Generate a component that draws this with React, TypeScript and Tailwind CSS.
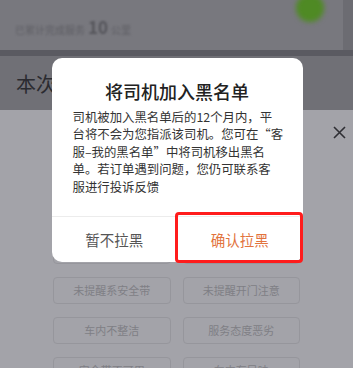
import React from 'react'

const chips = [
    ['投诉司机行为', '司机不认路'],
    ['未提醒系安全带', '未提醒开门注意'],
    ['车内不整洁', '服务态度恶劣'],
    ['安全带不可用', '车内有异味'],
]

// body copy, broken the way the dialog shows it
const bodyLines = [
    '司机被加入黑名单后的12个月内，平',
    '台将不会为您指派该司机。您可在“客',
    '服–我的黑名单”中将司机移出黑名',
    '单。若订单遇到问题，您仍可联系客',
    '服进行投诉反馈',
]

export default function App() {
    return (
        <div
            className="relative w-[353px] h-[368px] overflow-hidden bg-[#a3a3a9]"
            style={{ fontFamily: '"Noto Sans CJK SC", "Noto Sans", sans-serif' }}
        >
            {/* dimmed page underneath */}
            <div className="bg-[#6c6c72]">
                <div className="w-[343px] h-[50px] bg-[#78787e] flex justify-between items-start">
                    <div className="flex items-baseline gap-[3px] pl-[15px] pt-[14px] blur-[1.2px] text-[#5e5e64]">
                        <span className="text-[10px]">已累计完成服务</span>
                        <span className="text-[17px] font-bold text-[#55555b]">10</span>
                        <span className="text-[10px]">公里</span>
                    </div>
                    <div className="w-[28px] h-[28px] -mt-[6px] mr-[19px] rounded-full bg-[#4f8a24] blur-[2.5px]" />
                </div>
                <div className="h-[6px] bg-[#5a5a61]" />
            </div>
            <div className="h-[54px] bg-[#707076] pl-[16px] pt-[13px] text-[20px] leading-[30px] text-[#2b2b30]">
                本次行程评价
            </div>
            <div className="flex justify-end pr-[7px] pt-[16px] h-[127px]">
                <svg width="13" height="13" viewBox="0 0 13 13" fill="none" stroke="#2f2f34" strokeWidth="1.6">
                    <path d="M1 1l11 11M12 1L1 12" />
                </svg>
            </div>
            <div className="flex flex-col gap-[13px] px-[53px]">
                {chips.map((row, i) => (
                    <div key={i} className="grid grid-cols-2 gap-[12px]">
                        {row.map(c => (
                            <div
                                key={c}
                                className="h-[27px] rounded-[4px] border border-[#96969c] flex items-center justify-center text-[11px] text-[#7f7f85]"
                            >
                                {c}
                            </div>
                        ))}
                    </div>
                ))}
            </div>

            {/* confirmation dialog */}
            <div className="absolute inset-0 flex justify-center pt-[58px] pl-[1px]">
                <div className="relative w-[251px] h-[204px] rounded-[10px] bg-white flex flex-col">
                    <div className="pt-[21px] text-center text-[18px] leading-[24px] font-medium text-[#222]">
                        将司机加入黑名单
                    </div>
                    <div className="mt-[6px] pl-[21px] text-[12.4px] leading-[17.4px] text-[#333]">
                        {bodyLines.map(l => (
                            <div key={l} className="whitespace-nowrap">{l}</div>
                        ))}
                    </div>
                    <div className="mt-auto h-[46px] border-t border-[#ececec] flex">
                        <div className="flex-1 flex items-center justify-center text-[14.5px] text-[#555]">暂不拉黑</div>
                        <div className="flex-1 flex items-center justify-center text-[14.5px] text-[#e2733d]">确认拉黑</div>
                    </div>
                    <div className="absolute left-[123px] top-[154px] w-[128px] h-[51px] border-[3px] border-[#ff1c1c] rounded-[4px]" />
                </div>
            </div>
        </div>
    )
}
